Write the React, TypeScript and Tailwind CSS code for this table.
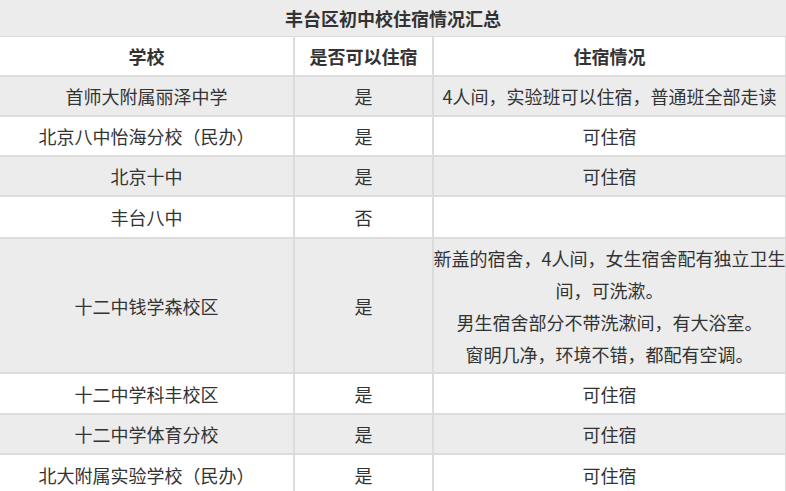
import React from "react";

type Row = { school: string; ok: string; info: React.ReactNode; h: string };

const rows: Row[] = [
  { school: "首师大附属丽泽中学", ok: "是", info: "4人间，实验班可以住宿，普通班全部走读", h: "h-[38px]" },
  { school: "北京八中怡海分校（民办）", ok: "是", info: "可住宿", h: "h-[38px]" },
  { school: "北京十中", ok: "是", info: "可住宿", h: "h-[38px]" },
  { school: "丰台八中", ok: "否", info: "", h: "h-[40px]" },
  {
    school: "十二中钱学森校区",
    ok: "是",
    info: (
      <>
        新盖的宿舍，4人间，女生宿舍配有独立卫生
        <br />
        间，可洗漱。
        <br />
        男生宿舍部分不带洗漱间，有大浴室。
        <br />
        窗明几净，环境不错，都配有空调。
      </>
    ),
    h: "h-[133px]",
  },
  { school: "十二中学科丰校区", ok: "是", info: "可住宿", h: "h-[39px]" },
  { school: "十二中学体育分校", ok: "是", info: "可住宿", h: "h-[38px]" },
  { school: "北大附属实验学校（民办）", ok: "是", info: "可住宿", h: "h-[40px]" },
];

const cell = "flex items-center justify-center text-center leading-[32px]";

export default function App() {
  return (
    <div
      className="w-[786px] h-[491px] overflow-hidden bg-white text-[18px] text-[#333333]"
      style={{ fontFamily: '"Noto Sans CJK SC", "Noto Sans", sans-serif' }}
    >
      <div className="h-[37px] bg-[#ececec] border-b border-[#dcdcdc] flex items-center justify-center font-bold">
        丰台区初中校住宿情况汇总
      </div>
      <div className="w-[786px] grid grid-cols-[293px_137px_351px] gap-[2px] bg-[#dcdcdc] border-r border-[#dcdcdc]">
        <div className={`${cell} h-[38px] bg-white font-bold`}>学校</div>
        <div className={`${cell} h-[38px] bg-white font-bold`}>是否可以住宿</div>
        <div className={`${cell} h-[38px] bg-white font-bold`}>住宿情况</div>
        {rows.map((r, i) => {
          const bg = i % 2 === 0 ? "bg-[#ececec]" : "bg-white";
          return (
            <React.Fragment key={r.school}>
              <div className={`${cell} ${r.h} ${bg}`}>{r.school}</div>
              <div className={`${cell} ${r.h} ${bg}`}>{r.ok}</div>
              <div className={`${cell} ${r.h} ${bg} whitespace-nowrap`}>
                <span>{r.info}</span>
              </div>
            </React.Fragment>
          );
        })}
      </div>
    </div>
  );
}
